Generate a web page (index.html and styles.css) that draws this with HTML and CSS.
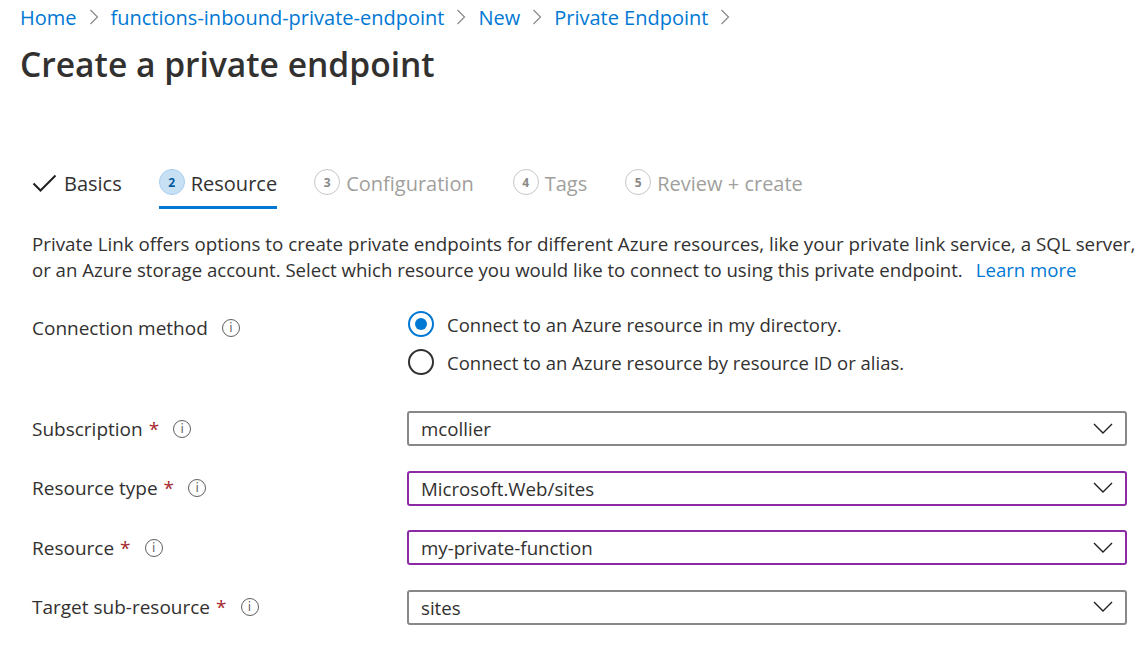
FILE: index.html
```html
<!DOCTYPE html>
<html>
<head>
<meta charset="utf-8">
<link rel="stylesheet" href="styles.css">
</head>
<body>
<div class="page">
  <nav class="crumbs">
    <a>Home</a><svg class="sep" width="10" height="16" viewBox="0 0 10 16"><path d="M1.5 1 L8.5 8 L1.5 15" fill="none" stroke="#8a8886" stroke-width="1.2"/></svg>
    <a>functions-inbound-private-endpoint</a><svg class="sep" width="10" height="16" viewBox="0 0 10 16"><path d="M1.5 1 L8.5 8 L1.5 15" fill="none" stroke="#8a8886" stroke-width="1.2"/></svg>
    <a>New</a><svg class="sep" width="10" height="16" viewBox="0 0 10 16"><path d="M1.5 1 L8.5 8 L1.5 15" fill="none" stroke="#8a8886" stroke-width="1.2"/></svg>
    <a>Private Endpoint</a><svg class="sep" width="10" height="16" viewBox="0 0 10 16"><path d="M1.5 1 L8.5 8 L1.5 15" fill="none" stroke="#8a8886" stroke-width="1.2"/></svg>
  </nav>
  <h1 class="title">Create a private endpoint</h1>

  <div class="tabs">
    <div class="tab done">
      <svg class="check" width="25" height="19" viewBox="0 0 25 19"><path d="M1.5 9.5 L8.5 16.5 L23.5 1.5" fill="none" stroke="#201f1e" stroke-width="2"/></svg>
      <span>Basics</span>
    </div>
    <div class="tab active">
      <span class="num">2</span><span>Resource</span>
    </div>
    <div class="tab off"><span class="num">3</span><span>Configuration</span></div>
    <div class="tab off"><span class="num">4</span><span>Tags</span></div>
    <div class="tab off"><span class="num">5</span><span>Review + create</span></div>
  </div>

  <div class="desc">
    <div class="desc-line">Private Link offers options to create private endpoints for different Azure resources, like your private link service, a SQL server,</div>
    <div class="desc-line"><span>or an Azure storage account. Select which resource you would like to connect to using this private endpoint.</span><a class="link">Learn more</a></div>
  </div>

  <div class="row radio-row">
    <div class="label">Connection method <span class="info">i</span></div>
    <div class="field radios">
      <div class="radio"><span class="dot on"></span>Connect to an Azure resource in my directory.</div>
      <div class="radio"><span class="dot"></span>Connect to an Azure resource by resource ID or alias.</div>
    </div>
  </div>

  <div class="row">
    <div class="label">Subscription <span class="star">*</span> <span class="info">i</span></div>
    <div class="field"><div class="select">mcollier<svg class="chev" width="20" height="12" viewBox="0 0 20 12"><path d="M1 1 L10 10 L19 1" fill="none" stroke="#201f1e" stroke-width="1.4"/></svg></div></div>
  </div>
  <div class="row">
    <div class="label">Resource type <span class="star">*</span> <span class="info">i</span></div>
    <div class="field"><div class="select hl">Microsoft.Web/sites<svg class="chev" width="20" height="12" viewBox="0 0 20 12"><path d="M1 1 L10 10 L19 1" fill="none" stroke="#201f1e" stroke-width="1.4"/></svg></div></div>
  </div>
  <div class="row">
    <div class="label">Resource <span class="star">*</span> <span class="info">i</span></div>
    <div class="field"><div class="select hl">my-private-function<svg class="chev" width="20" height="12" viewBox="0 0 20 12"><path d="M1 1 L10 10 L19 1" fill="none" stroke="#201f1e" stroke-width="1.4"/></svg></div></div>
  </div>
  <div class="row">
    <div class="label">Target sub-resource <span class="star">*</span> <span class="info">i</span></div>
    <div class="field"><div class="select">sites<svg class="chev" width="20" height="12" viewBox="0 0 20 12"><path d="M1 1 L10 10 L19 1" fill="none" stroke="#201f1e" stroke-width="1.4"/></svg></div></div>
  </div>
</div>
</body>
</html>
```

FILE: styles.css
```css
html, body {
  margin: 0;
  padding: 0;
  background: #ffffff;
}
body {
  font-family: "Segoe UI", "Open Sans", "Noto Sans", sans-serif;
  color: #323130;
  width: 1148px;
  height: 656px;
  overflow: hidden;
}
.page {
  padding: 0 0 0 20px;
}
.crumbs {
  display: flex;
  align-items: center;
  height: 34px;
  font-size: 20px;
  color: #0078d4;
}
.crumbs a { color: #0078d4; }
.crumbs .sep {
  margin: 0 12px;
  flex: none;
}
.title {
  margin: 7px 0 0 0;
  font-size: 33.6px;
  font-weight: 600;
  color: #323130;
  line-height: 46px;
}
.tabs {
  display: flex;
  margin-top: 73px;
  margin-left: 12px;
  gap: 37px;
  height: 52px;
  align-items: flex-start;
}
.tab {
  display: flex;
  align-items: center;
  gap: 6px;
  font-size: 20px;
  height: 46px;
}
.tab.done { gap: 7px; }
.tab.active {
  border-bottom: 3px solid #0078d4;
  height: 46px;
  color: #323130;
}
.tab.off { color: #a19f9d; }
.tab.off:nth-child(4) { margin-left: 2px; }
.tab.off:nth-child(5) { margin-left: 1px; }
.num {
  box-sizing: border-box;
  width: 26px;
  height: 26px;
  border-radius: 50%;
  border: 1.5px solid #c8c6c4;
  font-size: 12px;
  font-weight: 700;
  display: flex;
  align-items: center;
  justify-content: center;
  color: #8a8886;
  margin-top: -2px;
}
.active .num {
  background: #c7e0f4;
  border-color: #a6cdee;
  color: #005a9e;
}
.desc {
  margin: 19px 0 0 12px;
  font-size: 18.8px;
  line-height: 26px;
  width: 1112px;
}
.desc-line {
  display: flex;
  white-space: nowrap;
}
.desc-line:last-child { font-size: 18.6px; }
.link { color: #0078d4; margin-left: 13px; }
.row {
  display: flex;
  align-items: center;
  margin-left: 12px;
  height: 59.5px;
}
.radio-row {
  align-items: flex-start;
  height: auto;
  margin-top: 27px;
  margin-bottom: 23px;
}
.label {
  width: 375px;
  font-size: 19px;
  display: flex;
  align-items: center;
}
.radio-row .label { padding-top: 5px; }
.star { color: #a4262c; margin-left: 6px; }
.info {
  box-sizing: border-box;
  display: inline-flex;
  align-items: center;
  justify-content: center;
  width: 18px;
  height: 18px;
  border: 1px solid #605e5c;
  border-radius: 50%;
  font-size: 12px;
  color: #605e5c;
  margin-left: 14px;
  font-family: "DejaVu Sans", sans-serif;
}
.field { flex: 0 0 720px; }
.radios { display: flex; flex-direction: column; gap: 10px; }
.radio {
  display: flex;
  align-items: center;
  font-size: 18.5px;
  height: 28px;
  padding-left: 1px;
}
.dot {
  width: 26px;
  height: 26px;
  border: 2px solid #323130;
  border-radius: 50%;
  margin-right: 13px;
  box-sizing: border-box;
  position: relative;
  flex: none;
}
.dot.on {
  border-color: #0078d4;
}
.dot.on::after {
  content: "";
  position: absolute;
  left: 5px; top: 5px;
  width: 12px; height: 12px;
  border-radius: 50%;
  background: #0078d4;
}
.select {
  box-sizing: border-box;
  height: 35px;
  border: 2px solid #8a8886;
  border-radius: 3px;
  display: flex;
  align-items: center;
  justify-content: space-between;
  padding: 0 12px 0 12px;
  font-size: 18.7px;
}
.select.hl { border-color: #8c2aa5; }
.chev { flex: none; }
```
